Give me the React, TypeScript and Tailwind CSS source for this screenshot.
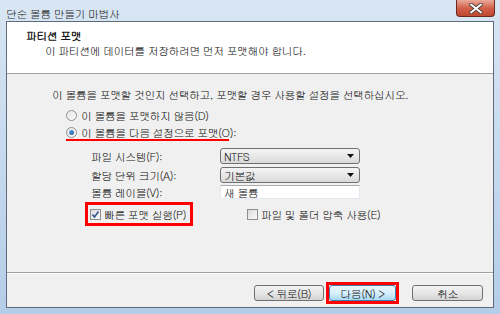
import React from "react";

const font = "font-['Gulim','Noto_Sans_CJK_KR',sans-serif]";

function Radio({ checked }: { checked?: boolean }) {
  return (
    <span className="flex h-[11px] w-[11px] shrink-0 items-center justify-center rounded-full border border-[#8e8f8f] bg-gradient-to-br from-[#e6e6e6] to-[#fcfcfc]">
      {checked && <span className="h-[5px] w-[5px] rounded-full bg-gradient-to-br from-[#63a8e8] to-[#1d5a98]" />}
    </span>
  );
}

function Checkbox({ checked }: { checked?: boolean }) {
  return (
    <span className="flex h-[11px] w-[11px] shrink-0 items-center justify-center border border-[#8e8f8f] bg-gradient-to-br from-[#dcdcdc] to-[#fafafa]">
      {checked && (
        <svg width="9" height="9" viewBox="0 0 9 9">
          <path d="M1.5 4.5 L3.5 7 L7.5 1.5" fill="none" stroke="#2b4a8a" strokeWidth="1.4" />
        </svg>
      )}
    </span>
  );
}

function Combo({ value }: { value: string }) {
  return (
    <div className="flex h-[16px] w-[140px] items-center justify-between rounded-[3px] border border-[#707070] bg-gradient-to-b from-[#f4f4f4] via-[#e8e8e8] to-[#d9d9d9] pl-[3px] pr-[5px]">
      <span>{value}</span>
      <svg width="7" height="4" viewBox="0 0 7 4">
        <path d="M0 0 H7 L3.5 4 Z" fill="#111" />
      </svg>
    </div>
  );
}

function Button({ label, w }: { label: string; w: string }) {
  return (
    <div
      className={`flex h-[16px] items-center justify-center rounded-[3px] border border-[#707070] bg-gradient-to-b from-[#f3f3f3] via-[#e6e6e6] to-[#d3d3d3] ${w}`}
    >
      {label}
    </div>
  );
}

export default function App() {
  return (
    <div
      className={`flex h-[314px] w-[500px] flex-col bg-gradient-to-b from-[#d9e6f3] via-[#c6d9ee] to-[#b4cde8] px-[6px] pb-[6px] text-[11px] leading-[15px] tracking-[-0.6px] whitespace-nowrap text-[#111] ${font}`}
    >
      {/* Title bar */}
      <div className="flex h-[21px] items-start justify-between">
        <span className="mt-[6px] text-[#1e1e1e]">단순 볼륨 만들기 마법사</span>
        <div className="-mr-[1px] flex h-[17px] w-[39px] items-center justify-center rounded-b-[4px] border border-t-0 border-[#6a2a1f] bg-gradient-to-b from-[#e9a99a] via-[#d2614b] to-[#c0462f]">
          <svg width="14" height="11" viewBox="0 0 14 11">
            <path d="M2 1.5 L12 9.5 M12 1.5 L2 9.5" stroke="#4a3a36" strokeWidth="3.6" strokeLinecap="round" />
            <path d="M2 1.5 L12 9.5 M12 1.5 L2 9.5" stroke="#ffffff" strokeWidth="2" strokeLinecap="round" />
          </svg>
        </div>
      </div>

      {/* Client area */}
      <div className="flex flex-1 flex-col border border-[#5d6b7c] bg-[#f0f0f0]">
        {/* Header */}
        <div className="h-[52px] border-b border-[#a0a0a0] bg-white pl-[19px] pt-[6px]">
          <div className="font-bold">파티션 포맷</div>
          <div className="pl-[19px]">이 파티션에 데이터를 저장하려면 먼저 포맷해야 합니다.</div>
        </div>

        {/* Body */}
        <div className="flex flex-1 flex-col pl-[45px] pt-[13px]">
          <div>이 볼륨을 포맷할 것인지 선택하고, 포맷할 경우 사용할 설정을 선택하십시오.</div>

          <div className="ml-[14px] mt-[5px] flex h-[16px] items-center gap-[4px]">
            <Radio />
            <span>이 볼륨을 포맷하지 않음(D)</span>
          </div>
          <div className="relative ml-[14px] mt-[1px] flex h-[16px] items-center gap-[4px]">
            <Radio checked />
            <span>이 볼륨을 다음 설정으로 포맷(O):</span>
            <span className="absolute -bottom-[1px] left-0 h-[2px] w-[163px] bg-[#ff0000]" />
          </div>

          <div className="ml-[39px] mt-[8px] flex flex-col">
            <div className="flex h-[16px] items-center">
              <span className="w-[129px]">파일 시스템(F):</span>
              <Combo value="NTFS" />
            </div>
            <div className="mt-[3px] flex h-[16px] items-center">
              <span className="w-[129px]">할당 단위 크기(A):</span>
              <Combo value="기본값" />
            </div>
            <div className="mt-[2px] flex h-[14px] items-center">
              <span className="w-[129px]">볼륨 레이블(V):</span>
              <div className="flex h-[14px] w-[140px] items-center border border-[#e3e9ef] border-t-[#abadb3] bg-white pl-[3px]">
                새 볼륨
              </div>
            </div>
          </div>

          <div className="ml-[33px] mt-[3px] flex items-center">
            <div className="flex h-[24px] w-[108px] items-center gap-[3px] border-[3px] border-[#ff0000] pl-[2px]">
              <Checkbox checked />
              <span>빠른 포맷 실행(P)</span>
            </div>
            <div className="ml-[54px] flex items-center gap-[3px]">
              <Checkbox />
              <span>파일 및 폴더 압축 사용(E)</span>
            </div>
          </div>
        </div>

        {/* Footer */}
        <div className="flex h-[35px] items-start justify-end border-t border-[#a0a0a0] pr-[10px] pt-[9px] shadow-[inset_0_1px_0_#ffffff]">
          <div className="flex h-[22px] items-center">
            <Button label="< 뒤로(B)" w="w-[70px]" />
            <div className="ml-[2px] flex h-[22px] w-[73px] items-center justify-center border-[3px] border-[#ff0000]">
              <div className="flex h-[16px] w-[67px] items-center justify-center rounded-[3px] border border-[#3c7fb1] bg-gradient-to-b from-[#eaf6fd] via-[#d9f0fc] to-[#a7d9f5]">
                다음(N) &gt;
              </div>
            </div>
            <div className="ml-[13px]">
              <Button label="취소" w="w-[71px]" />
            </div>
          </div>
        </div>
      </div>
    </div>
  );
}
